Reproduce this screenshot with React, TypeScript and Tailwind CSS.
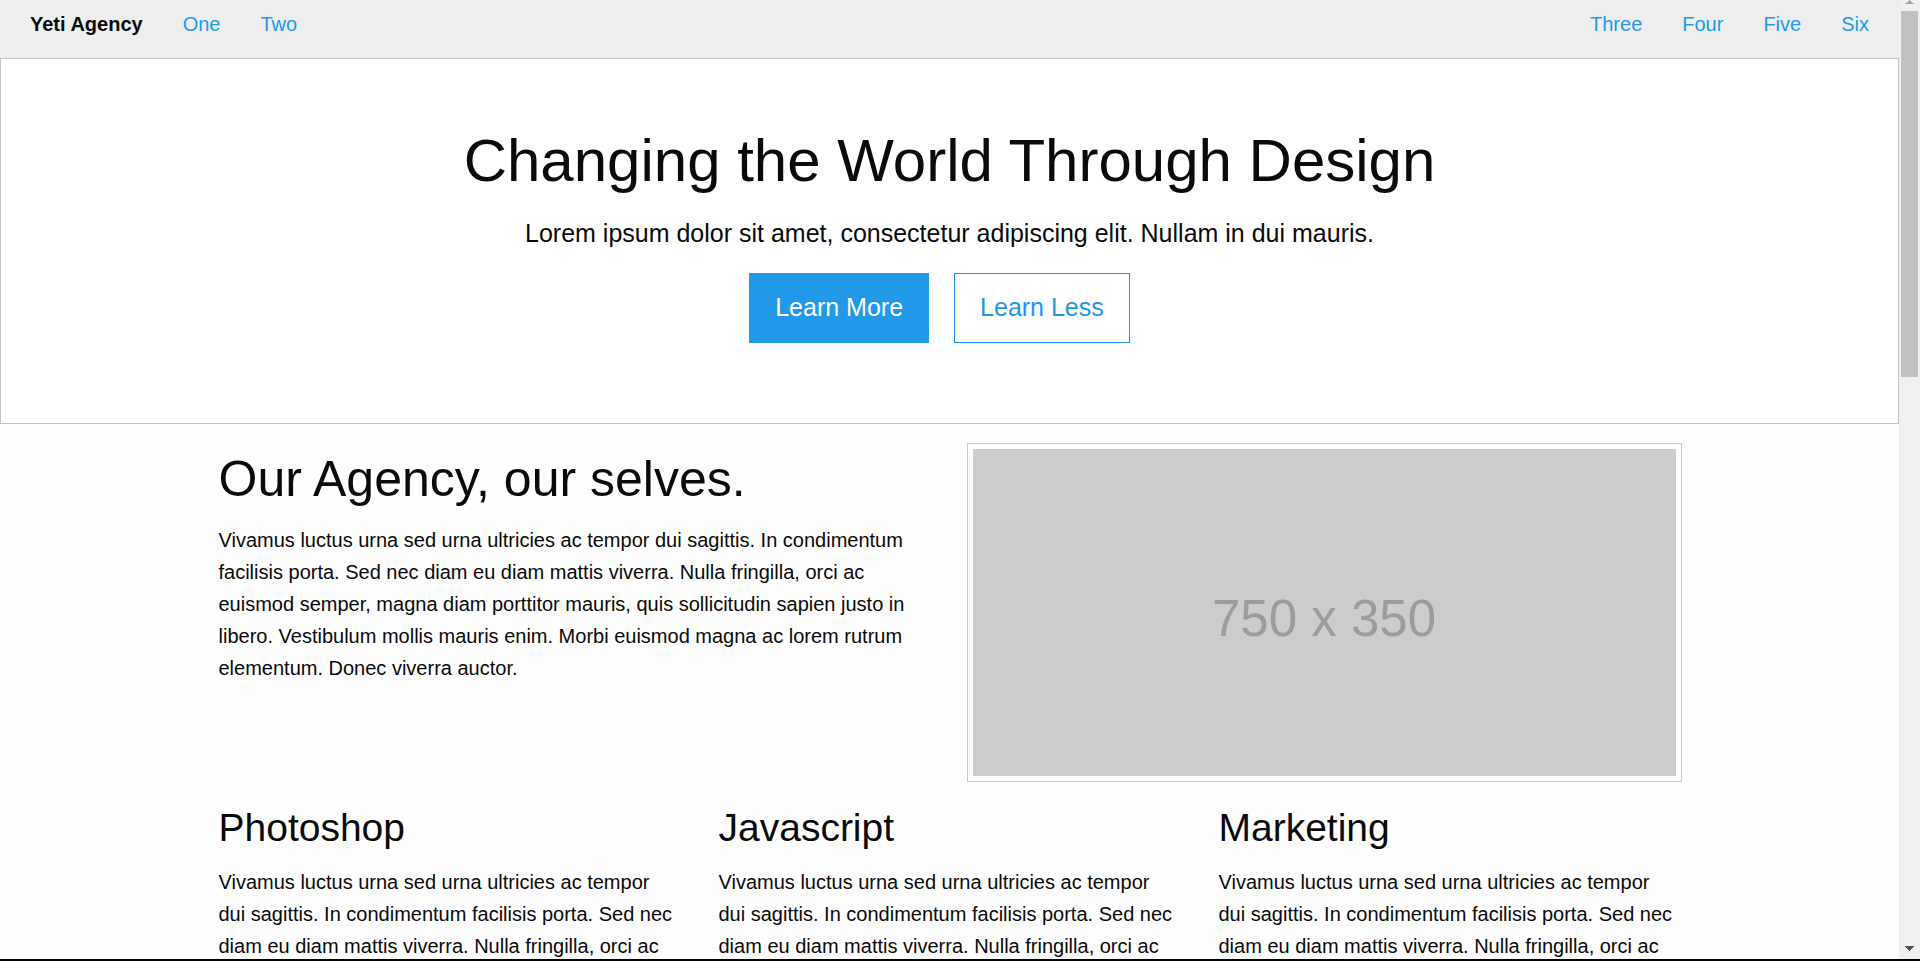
const leftLinks = ["One", "Two"];
const rightLinks = ["Three", "Four", "Five", "Six"];
const services = ["Photoshop", "Javascript", "Marketing"];

const serviceText =
  "Vivamus luctus urna sed urna ultricies ac tempor dui sagittis. In condimentum facilisis porta. Sed nec diam eu diam mattis viverra. Nulla fringilla, orci ac";

function NavLinks({ items }: { items: string[] }) {
  return (
    <ul className="flex gap-10">
      {items.map((item) => (
        <li key={item}>
          <a href="#" className="text-[#2199e8]">
            {item}
          </a>
        </li>
      ))}
    </ul>
  );
}

function TopBar() {
  return (
    <nav className="flex h-[58px] shrink-0 justify-between bg-[#eeeeee] px-[30px] pt-3.5 leading-5">
      <div className="flex gap-10">
        <span className="font-bold">Yeti Agency</span>
        <NavLinks items={leftLinks} />
      </div>
      <NavLinks items={rightLinks} />
    </nav>
  );
}

function Hero() {
  return (
    <header className="border border-[#c1c1c1] bg-white pt-[60px] pb-20 text-center">
      <h1 className="mb-2.5 text-[60px] leading-[84px]">Changing the World Through Design</h1>
      <p className="mb-5 text-[25px] leading-10">
        Lorem ipsum dolor sit amet, consectetur adipiscing elit. Nullam in dui mauris.
      </p>
      <div className="flex justify-center gap-[25px] pr-5 text-[25px] leading-[25px]">
        <button
          type="button"
          className="h-[70px] border border-[#2199e8] bg-[#2199e8] px-[25px] pb-0.5 text-[#fefefe]"
        >
          Learn More
        </button>
        <button type="button" className="h-[70px] border border-[#2199e8] px-[25px] pb-0.5 text-[#2199e8]">
          Learn Less
        </button>
      </div>
    </header>
  );
}

function Scrollbar() {
  return (
    <div aria-hidden="true" className="flex w-[21px] shrink-0 flex-col items-center bg-[#f0f0f0]">
      <svg viewBox="0 0 9 4" className="mb-[7px] h-1 w-[9px]" fill="#a3a3a3" shapeRendering="crispEdges">
        <path d="M4 0h1v1h1v1h1v1h2v1H0V3h2V2h1V1h1z" />
      </svg>
      <div className="h-[366px] w-[17px] bg-[#c1c1c1]" />
      <svg viewBox="0 0 9 5" className="mt-auto mb-2 h-[5px] w-[9px]" fill="#505050" shapeRendering="crispEdges">
        <path d="M0 0h9v1H8v1H7v1H6v1H5v1H4V4H3V3H2V2H1V1H0z" />
      </svg>
    </div>
  );
}

export default function App() {
  return (
    <div className="flex h-screen overflow-hidden border-b-2 border-black bg-[#fefefe] font-['Liberation_Sans',Arial,sans-serif] text-[20px] leading-8 text-[#0a0a0a]">
      <div className="min-w-0 flex-1 overflow-hidden">
        <TopBar />
        <Hero />
        <main className="mx-auto max-w-[1500px]">
          <section className="grid grid-cols-2 pt-[19px]">
            <div className="px-[19px] pt-px">
              <h2 className="mb-2.5 text-[50px] leading-[70px]">Our Agency, our selves.</h2>
              <p>
                Vivamus luctus urna sed urna ultricies ac tempor dui sagittis. In condimentum facilisis porta. Sed nec
                diam eu diam mattis viverra. Nulla fringilla, orci ac euismod semper, magna diam porttitor mauris, quis
                sollicitudin sapien justo in libero. Vestibulum mollis mauris enim. Morbi euismod magna ac lorem rutrum
                elementum. Donec viverra auctor.
              </p>
            </div>
            <div className="pr-[18px] pl-[17px]">
              <div className="border border-[#cacaca] bg-[#fefefe] p-[5px]">
                <div className="flex aspect-[703/327] items-center justify-center bg-[#cccccc] pt-3 text-[51px] text-[#9c9c9c]">
                  750 x 350
                </div>
              </div>
            </div>
          </section>
          <section className="grid grid-cols-3 pt-[19px]">
            {services.map((service) => (
              <article key={service} className="px-[19px]">
                <h3 className="mb-[11px] text-[39px] leading-[54px]">{service}</h3>
                <p>{serviceText}</p>
              </article>
            ))}
          </section>
        </main>
      </div>
      <Scrollbar />
    </div>
  );
}
